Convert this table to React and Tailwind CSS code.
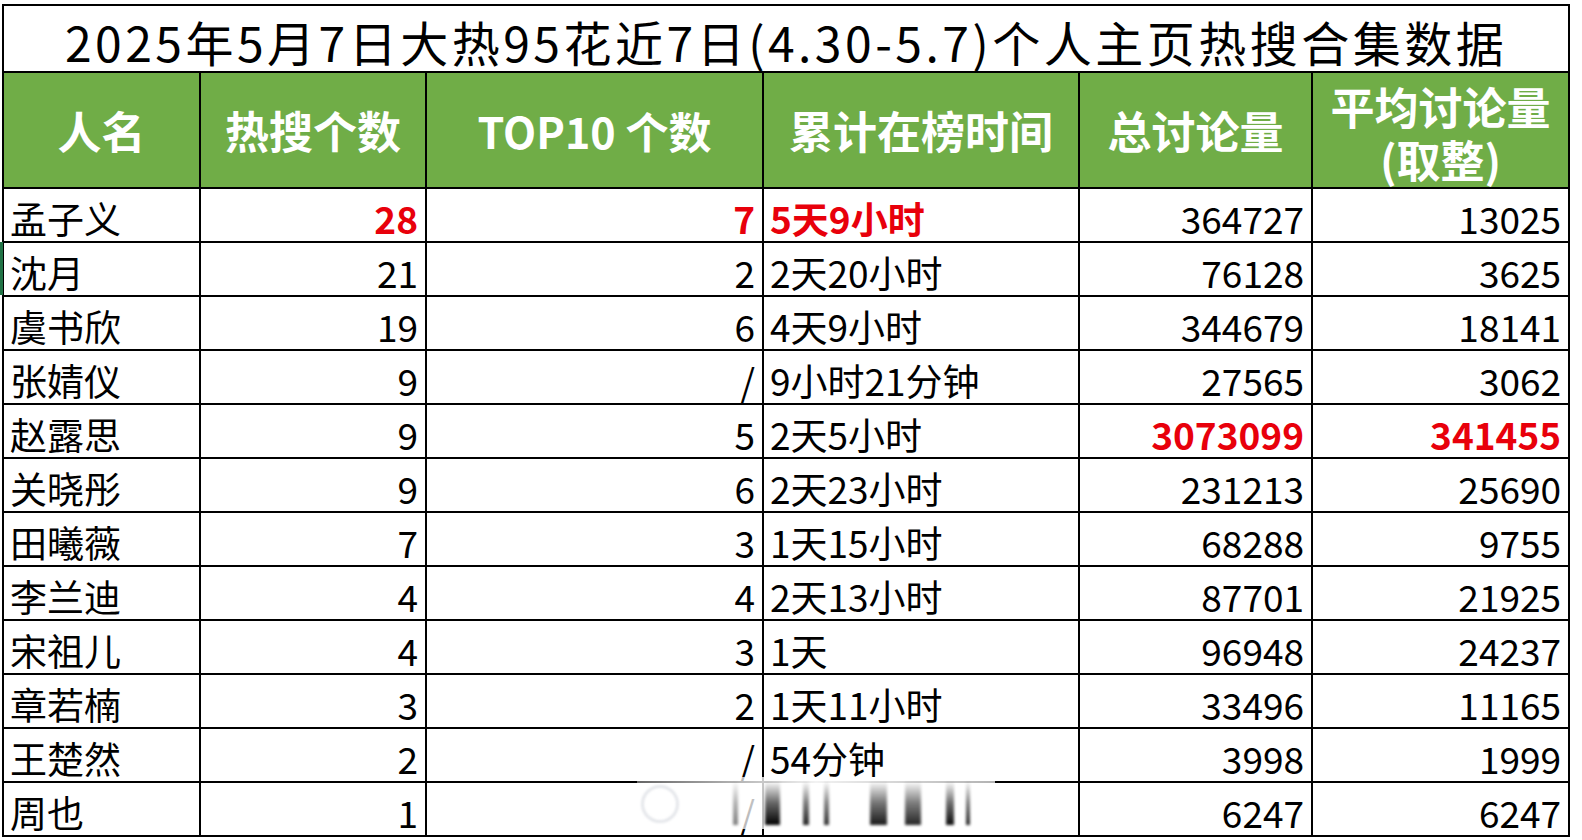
import React from 'react';

const rows = [
    { name: "孟子义", hot: "28", top: "7", time: "5天9小时", total: "364727", avg: "13025", red: ["hot", "top", "time"] },
    { name: "沈月", hot: "21", top: "2", time: "2天20小时", total: "76128", avg: "3625" },
    { name: "虞书欣", hot: "19", top: "6", time: "4天9小时", total: "344679", avg: "18141" },
    { name: "张婧仪", hot: "9", top: "/", time: "9小时21分钟", total: "27565", avg: "3062" },
    { name: "赵露思", hot: "9", top: "5", time: "2天5小时", total: "3073099", avg: "341455", red: ["total", "avg"] },
    { name: "关晓彤", hot: "9", top: "6", time: "2天23小时", total: "231213", avg: "25690" },
    { name: "田曦薇", hot: "7", top: "3", time: "1天15小时", total: "68288", avg: "9755" },
    { name: "李兰迪", hot: "4", top: "4", time: "2天13小时", total: "87701", avg: "21925" },
    { name: "宋祖儿", hot: "4", top: "3", time: "1天", total: "96948", avg: "24237" },
    { name: "章若楠", hot: "3", top: "2", time: "1天11小时", total: "33496", avg: "11165" },
    { name: "王楚然", hot: "2", top: "/", time: "54分钟", total: "3998", avg: "1999" },
    { name: "周也", hot: "1", top: "/", time: "", total: "6247", avg: "6247" },
];

const font = { fontFamily: '"Noto Sans CJK SC", "Noto Sans", sans-serif' };

// blurred bars of the watermark smear over the last row
const smear = [
    { left: 96, w: 5, o: 0.5 },
    { left: 128, w: 15, o: 1 },
    { left: 166, w: 6, o: 0.85 },
    { left: 187, w: 5, o: 0.8 },
    { left: 233, w: 17, o: 0.9 },
    { left: 268, w: 16, o: 0.85 },
    { left: 309, w: 8, o: 0.95 },
    { left: 329, w: 4, o: 0.85 },
];

const Cell = ({ children, align = "left", red, className = "" }) => (
    <td
        className={`border-2 border-black h-[54px] pt-[6px] text-[37px] leading-[44px] whitespace-nowrap ${align === "right" ? "text-right pl-[8px] pr-[7px]" : "text-left pl-[6px] pr-[6px]"} ${red ? "text-[#e8000b] font-bold" : "text-black"} ${className}`}
    >
        {children}
    </td>
);

const App = () => {
    return (
        <div className="w-[1582px] h-[840px] bg-white overflow-hidden relative" style={font}>
            <div className="pt-[4px] pl-[2px]">
                <table className="table-fixed border-collapse w-[1566px]">
                    <colgroup>
                        <col className="w-[197px]" />
                        <col className="w-[226px]" />
                        <col className="w-[337px]" />
                        <col className="w-[316px]" />
                        <col className="w-[233px]" />
                        <col className="w-[257px]" />
                    </colgroup>
                    <thead>
                        <tr>
                            <th colSpan={6} className="border-2 border-black h-[67px] text-[48px] tracking-[3.5px] font-normal text-black leading-[56px] text-center pt-[4px]">
                                2025年5月7日大热95花近7日(4.30-5.7)个人主页热搜合集数据
                            </th>
                        </tr>
                        <tr className="bg-[#70ad47] text-white">
                            <th className="border-2 border-black h-[116px] text-[44px] font-semibold leading-[52px]">人名</th>
                            <th className="border-2 border-black text-[44px] font-semibold leading-[52px]">热搜个数</th>
                            <th className="border-2 border-black text-[43px] font-semibold leading-[52px]">TOP10 个数</th>
                            <th className="border-2 border-black text-[44px] font-semibold leading-[52px]">累计在榜时间</th>
                            <th className="border-2 border-black text-[44px] font-semibold leading-[52px]">总讨论量</th>
                            <th className="border-2 border-black text-[44px] font-semibold pt-[2px]">
                                <div className="leading-[55px]">平均讨论量</div>
                                <div className="leading-[50px]">(取整)</div>
                            </th>
                        </tr>
                    </thead>
                    <tbody>
                        {rows.map((r, i) => {
                            const red = r.red || [];
                            return (
                                <tr key={i}>
                                    <Cell>{r.name}</Cell>
                                    <Cell align="right" red={red.includes("hot")}>{r.hot}</Cell>
                                    <Cell align="right" red={red.includes("top")}>{r.top}</Cell>
                                    <Cell red={red.includes("time")}>{r.time}</Cell>
                                    <Cell align="right" red={red.includes("total")}>{r.total}</Cell>
                                    <Cell align="right" red={red.includes("avg")}>{r.avg}</Cell>
                                </tr>
                            );
                        })}
                    </tbody>
                </table>
            </div>

            {/* left selection marker */}
            <div className="absolute left-0 top-[242px] w-[3px] h-[53px] bg-[#217346]" />

            {/* watermark smear */}
            <div className="absolute left-[637px] top-[777px] w-[358px] h-[52px] bg-gradient-to-r from-white/40 via-white/95 to-white/70">
                <div className="absolute left-[4px] top-[8px] w-[38px] h-[38px] rounded-full border-[3px] border-gray-200 blur-[1px]" />
                {smear.map((s, i) => (
                    <div
                        key={i}
                        className="absolute top-[4px] h-[44px] bg-gradient-to-b from-transparent via-black/60 to-black blur-[1.5px]"
                        style={{ left: s.left, width: s.w, opacity: s.o }}
                    />
                ))}
            </div>
        </div>
    );
};

export default App;
